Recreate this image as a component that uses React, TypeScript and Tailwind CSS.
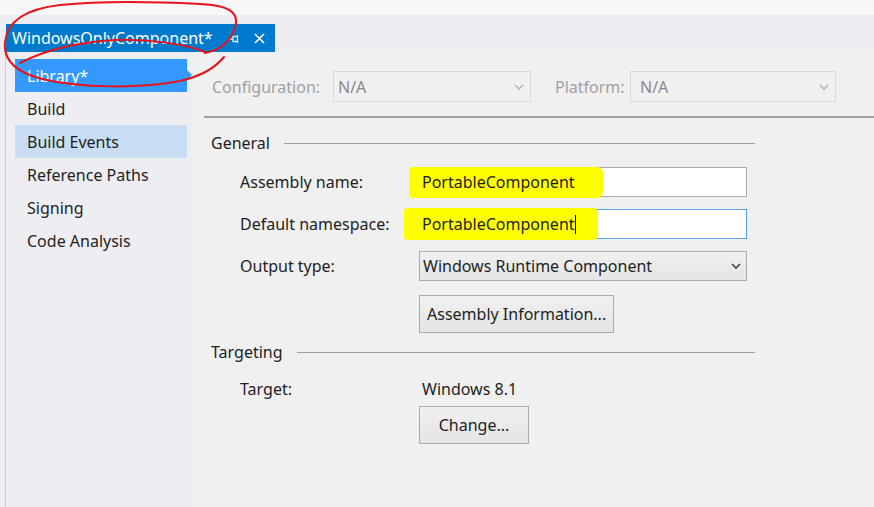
import React from "react";

const font = { fontFamily: '"Noto Sans", "Open Sans", sans-serif' };

const navItems = [
  { label: "Library*", state: "active" },
  { label: "Build", state: "" },
  { label: "Build Events", state: "hover" },
  { label: "Reference Paths", state: "" },
  { label: "Signing", state: "" },
  { label: "Code Analysis", state: "" },
];

const Chevron = ({ color = "#a8a8a8" }: { color?: string }) => (
  <svg width="10" height="6" viewBox="0 0 10 6" className="shrink-0">
    <path d="M1 1 L5 5 L9 1" fill="none" stroke={color} strokeWidth="1.6" />
  </svg>
);

const SectionHeading = ({ title }: { title: string }) => (
  <div className="flex items-center h-[22px] pl-[7px]">
    <span className="text-[16px] text-[#1e1e1e] mr-[14px]">{title}</span>
    <div className="flex-1 h-px bg-[#a0a0a0]" />
  </div>
);

const Highlight = ({ className }: { className: string }) => (
  <div className={`absolute bg-[#ffff00] ${className}`} />
);

export default function App() {
  return (
    <div className="w-[874px] h-[507px] overflow-hidden relative bg-[#eeeef2] flex flex-col" style={font}>
      {/* top strip */}
      <div className="h-[15px] bg-[#f7f7f7] shrink-0" />

      {/* document tab row */}
      <div className="h-[37px] shrink-0 pt-[9px] pl-[6px] flex">
        <div className="h-[28px] w-[269px] bg-[#007acc] flex items-center pl-[6px] text-white text-[16px]">
          <span>WindowsOnlyComponent*</span>
          <svg width="12" height="10" viewBox="0 0 12 10" className="ml-[15px] mt-[2px]">
            <path d="M1 5 H5 M5 2.5 H9.5 V7.5 H5 Z M9.5 1 V9" fill="none" stroke="#d0e6f5" strokeWidth="1.3" />
          </svg>
          <svg width="11" height="11" viewBox="0 0 11 11" className="ml-[14px]">
            <path d="M1 1 L10 10 M10 1 L1 10" stroke="#ffffff" strokeWidth="1.6" />
          </svg>
        </div>
      </div>

      {/* body */}
      <div className="flex flex-1 min-h-0">
        <div className="w-[6px] bg-[#eeeef2] border-r border-[#c9c9d8] shrink-0" />
        <div className="flex flex-1 bg-[#f0f0f0]">
          {/* left nav */}
          <div className="w-[189px] shrink-0 pt-[7px] pl-[9px] bg-[#eeeef2]">
            {navItems.map((item) => (
              <div
                key={item.label}
                className={`relative h-[33px] w-[172px] pl-[12px] flex items-center text-[16px] ${
                  item.state === "active"
                    ? "bg-[#3399ff] text-white"
                    : item.state === "hover"
                    ? "bg-[#c9def5] text-[#1e1e1e]"
                    : "text-[#1e1e1e]"
                }`}
              >
                {item.label}
                {item.state === "active" && (
                  <div className="absolute right-[-5px] top-[11px] w-0 h-0 border-y-[5px] border-y-transparent border-l-[5px] border-l-[#3399ff]" />
                )}
              </div>
            ))}
          </div>

          {/* property page */}
          <div className="flex-1 pl-[9px]">
            <div className="flex items-center pt-[19px] pl-[8px] h-[50px]">
              <span className="text-[16px] text-[#a0a0a0] w-[121px]">Configuration:</span>
              <div className="w-[198px] h-[31px] border border-[#d9d9d9] flex items-center justify-between pl-[4px] pr-[6px] text-[16px] text-[#8a8a8a]">
                <span>N/A</span>
                <Chevron color="#b5b5b5" />
              </div>
              <span className="text-[16px] text-[#a0a0a0] ml-[24px] w-[75px]">Platform:</span>
              <div className="w-[206px] h-[31px] border border-[#d9d9d9] flex items-center justify-between pl-[9px] pr-[6px] text-[16px] text-[#8a8a8a]">
                <span>N/A</span>
                <Chevron color="#b5b5b5" />
              </div>
            </div>
            <div className="h-[2px] bg-[#a0a0a0] mt-[14px]" />

            <div className="w-[551px] mt-[14px]">
              <SectionHeading title="General" />

              <div className="flex flex-col gap-[12px] mt-[13px] pl-[36px]">
                <div className="flex items-center h-[30px]">
                  <span className="w-[179px] text-[16px] text-[#1e1e1e]">Assembly name:</span>
                  <div className="relative w-[328px] h-[30px] bg-white border border-[#ababab] flex items-center pl-[2px] text-[16px] text-[#1e1e1e]">
                    <Highlight className="left-[-11px] top-[-1px] w-[194px] h-[31px] rounded-r-[6px] rounded-l-[3px]" />
                    <span className="relative">PortableComponent</span>
                  </div>
                </div>
                <div className="flex items-center h-[30px]">
                  <span className="w-[179px] text-[16px] text-[#1e1e1e]">Default namespace:</span>
                  <div className="relative w-[328px] h-[30px] bg-white border border-[#5a9fe6] flex items-center pl-[2px] text-[16px] text-[#1e1e1e]">
                    <Highlight className="left-[-16px] top-[-2px] w-[194px] h-[32px] rounded-r-[5px] rounded-l-[4px]" />
                    <span className="relative">PortableComponent</span>
                    <span className="relative w-px h-[19px] bg-black" />
                  </div>
                </div>
                <div className="flex items-center h-[30px]">
                  <span className="w-[179px] text-[16px] text-[#1e1e1e]">Output type:</span>
                  <div className="w-[328px] h-[30px] border border-[#acacac] bg-gradient-to-b from-[#f0f0f0] to-[#e5e5e5] flex items-center justify-between pl-[3px] pr-[5px] text-[16px] text-[#1e1e1e]">
                    <span>Windows Runtime Component</span>
                    <Chevron color="#404040" />
                  </div>
                </div>
                <div className="flex items-center pl-[179px] mt-[2px]">
                  <div className="h-[38px] px-[7px] border border-[#acacac] bg-gradient-to-b from-[#f0f0f0] to-[#e5e5e5] flex items-center text-[16px] text-[#1e1e1e]">
                    Assembly Information...
                  </div>
                </div>
              </div>

              <div className="mt-[8px]">
                <SectionHeading title="Targeting" />
              </div>

              <div className="pl-[36px] mt-[16px]">
                <div className="flex items-center h-[20px]">
                  <span className="w-[182px] text-[16px] text-[#1e1e1e]">Target:</span>
                  <span className="text-[16px] text-[#1e1e1e]">Windows 8.1</span>
                </div>
                <div className="pl-[179px] mt-[7px]">
                  <div className="w-[110px] h-[38px] border border-[#acacac] bg-gradient-to-b from-[#f0f0f0] to-[#e5e5e5] flex items-center justify-center text-[16px] text-[#1e1e1e]">
                    Change...
                  </div>
                </div>
              </div>
            </div>
          </div>
        </div>
      </div>

      {/* red annotation */}
      <svg className="absolute left-0 top-0 pointer-events-none" width="260" height="100" viewBox="0 0 260 100">
        <path
          d="M20 63 C45 50 80 42 115 40 C150 39 185 44 205 52"
          fill="none"
          stroke="#e8121b"
          strokeWidth="2"
          strokeLinecap="round"
        />
        <path
          d="M205 53 C220 50 230 42 235 28 C240 12 228 5 200 4 C160 2 100 1 60 5 C25 9 7 22 5 42 C3 60 15 72 42 79 C80 88 140 89 180 81 C202 76 215 68 224 57"
          fill="none"
          stroke="#e8121b"
          strokeWidth="2"
          strokeLinecap="round"
        />
      </svg>
    </div>
  );
}
